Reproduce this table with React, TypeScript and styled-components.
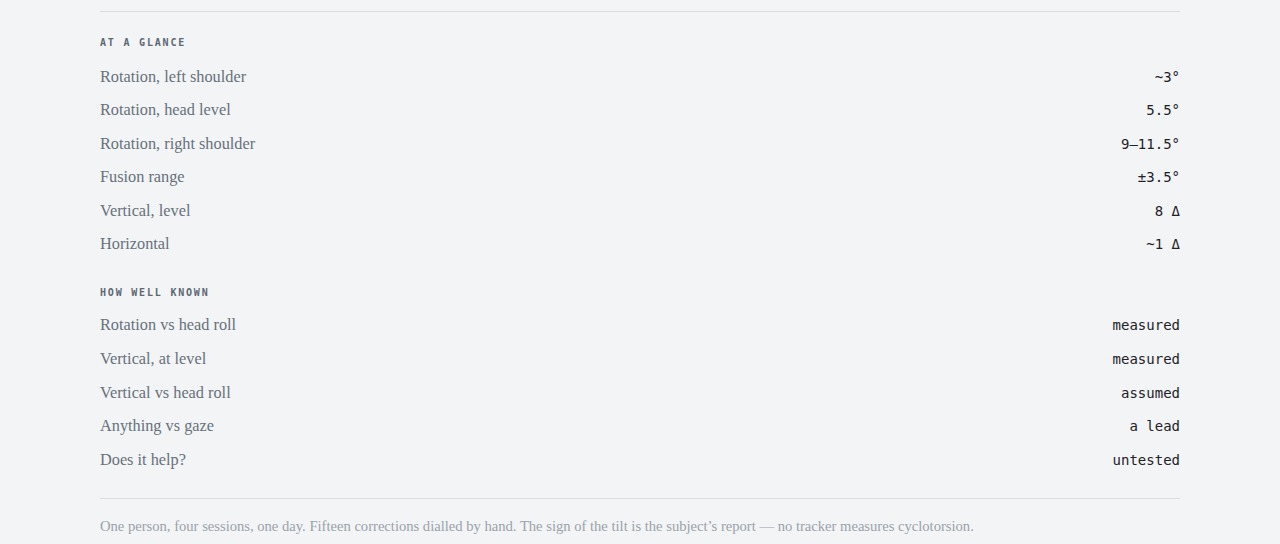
import React from "react";
import styled, { createGlobalStyle } from "styled-components";

const Global = createGlobalStyle`
  html, body { margin: 0; padding: 0; background: #f3f4f6; }
  body { font-family: "Liberation Serif", serif; }
`;

const Page = styled.div`
  padding: 0 100px;
  box-sizing: border-box;
  width: 1280px;
`;

const Section = styled.section`
  border-top: 1px solid #d9dce0;
  margin-top: 11px;
  padding-top: 23px;
`;

const Heading = styled.h3<{ $after?: number }>`
  margin: 0 0 ${(p) => p.$after ?? 10}px;
  font-family: "DejaVu Sans Mono", monospace;
  font-weight: bold;
  font-size: 10px;
  line-height: 15px;
  letter-spacing: 0.18em;
  text-transform: uppercase;
  color: #5d6872;
`;

const Group = styled.div<{ $gap?: number }>`
  margin-bottom: ${(p) => p.$gap ?? 0}px;
`;

const Row = styled.div`
  display: flex;
  justify-content: space-between;
  align-items: baseline;
  padding: 4.78px 0;
  line-height: 24px;
`;

const Label = styled.span`
  font-family: "Liberation Serif", serif;
  font-size: 16.3px;
  color: #66717b;
`;

const Value = styled.span`
  font-family: "DejaVu Sans Mono", monospace;
  font-size: 14px;
  color: #1e2227;
`;

const Footer = styled.footer`
  margin-top: 22px;
  border-top: 1px solid #d9dee0;
  padding-top: 17px;
  font-family: "Liberation Serif", serif;
  font-size: 14.6px;
  line-height: 20px;
  color: #9aa2aa;
`;

const glance: [string, string][] = [
  ["Rotation, left shoulder", "~3°"],
  ["Rotation, head level", "5.5°"],
  ["Rotation, right shoulder", "9–11.5°"],
  ["Fusion range", "±3.5°"],
  ["Vertical, level", "8 Δ"],
  ["Horizontal", "~1 Δ"],
];

const known: [string, string][] = [
  ["Rotation vs head roll", "measured"],
  ["Vertical, at level", "measured"],
  ["Vertical vs head roll", "assumed"],
  ["Anything vs gaze", "a lead"],
  ["Does it help?", "untested"],
];

export default function App() {
  return (
    <>
      <Global />
      <Page>
        <Section>
          <Group $gap={23.5}>
            <Heading>At a glance</Heading>
            {glance.map(([l, v]) => (
              <Row key={l}>
                <Label>{l}</Label>
                <Value>{v}</Value>
              </Row>
            ))}
          </Group>
          <Group>
            <Heading $after={9}>How well known</Heading>
            {known.map(([l, v]) => (
              <Row key={l}>
                <Label>{l}</Label>
                <Value>{v}</Value>
              </Row>
            ))}
          </Group>
        </Section>
        <Footer>
          One person, four sessions, one day. Fifteen corrections dialled by hand. The sign of the tilt is the subject’s report — no tracker measures cyclotorsion.
        </Footer>
      </Page>
    </>
  );
}
